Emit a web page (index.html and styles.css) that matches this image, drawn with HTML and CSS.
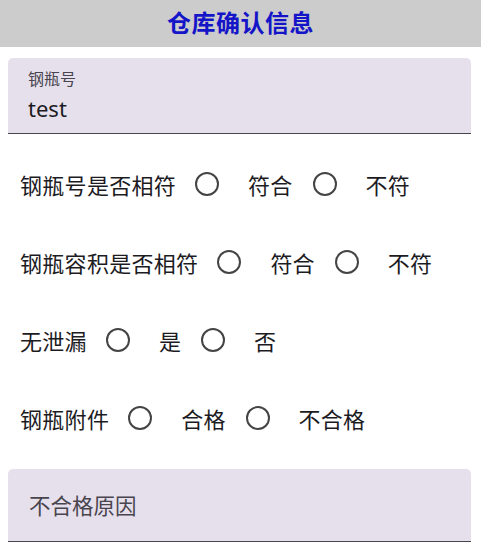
FILE: index.html
```html
<!DOCTYPE html>
<html lang="zh">
<head>
<meta charset="utf-8">
<link rel="stylesheet" href="styles.css">
</head>
<body>
<header class="bar"><h1 class="title">仓库确认信息</h1></header>
<main class="form">
  <div class="field filled">
    <span class="field-label">钢瓶号</span>
    <span class="field-value">test</span>
  </div>
  <div class="rows">
    <div class="row">
      <span class="row-label">钢瓶号是否相符</span>
      <span class="radio"></span><span class="opt">符合</span>
      <span class="radio"></span><span class="opt">不符</span>
    </div>
    <div class="row">
      <span class="row-label">钢瓶容积是否相符</span>
      <span class="radio"></span><span class="opt">符合</span>
      <span class="radio"></span><span class="opt">不符</span>
    </div>
    <div class="row">
      <span class="row-label">无泄漏</span>
      <span class="radio"></span><span class="opt">是</span>
      <span class="radio"></span><span class="opt">否</span>
    </div>
    <div class="row">
      <span class="row-label">钢瓶附件</span>
      <span class="radio"></span><span class="opt">合格</span>
      <span class="radio"></span><span class="opt">不合格</span>
    </div>
  </div>
  <div class="field empty">
    <span class="placeholder">不合格原因</span>
  </div>
</main>
</body>
</html>
```
FILE: styles.css
```css
html, body {
  margin: 0;
  padding: 0;
  background: #ffffff;
  font-family: "Noto Sans CJK SC", "Noto Sans", sans-serif;
}
.bar {
  height: 47px;
  background: #cccccc;
  display: flex;
  align-items: center;
  justify-content: center;
}
.title {
  margin: 0;
  font-size: 24px;
  font-weight: 700;
  color: #1414c8;
  line-height: 1;
  letter-spacing: 0.5px;
  transform: translateY(-2px);
}
.form {
  padding: 11px 10px 0 8px;
  display: flex;
  flex-direction: column;
}
.field {
  background: #e6e0ec;
  border-radius: 5px 5px 0 0;
  border-bottom: 1.5px solid #49454f;
  box-sizing: border-box;
  display: flex;
  flex-direction: column;
  padding-left: 20px;
}
.filled {
  height: 76px;
  padding-top: 10px;
}
.field-label {
  font-size: 16px;
  color: #49454f;
  line-height: 20px;
}
.field-value {
  font-family: "Noto Sans", "Noto Sans CJK SC", sans-serif;
  font-size: 22px;
  color: #1c1b1f;
  line-height: 30px;
  margin-top: 5px;
}
.empty {
  height: 73px;
  justify-content: center;
  margin-top: 27px;
  padding-left: 21px;
}
.placeholder {
  font-size: 21.5px;
  color: #49454f;
  line-height: 28px;
}
.rows {
  display: flex;
  flex-direction: column;
  gap: 30px;
  margin-top: 26px;
}
.row {
  height: 48px;
  display: flex;
  align-items: center;
  padding-left: 12px;
  font-size: 22px;
  color: #1c1b1f;
}
.row-label {
  margin-right: 19px;
  letter-spacing: 0.3px;
}
.radio {
  width: 20px;
  height: 20px;
  border: 2.5px solid #444444;
  border-radius: 50%;
  flex: none;
  margin-right: 29px;
}
.opt {
  margin-right: 20px;
  letter-spacing: 0.2px;
}
```
